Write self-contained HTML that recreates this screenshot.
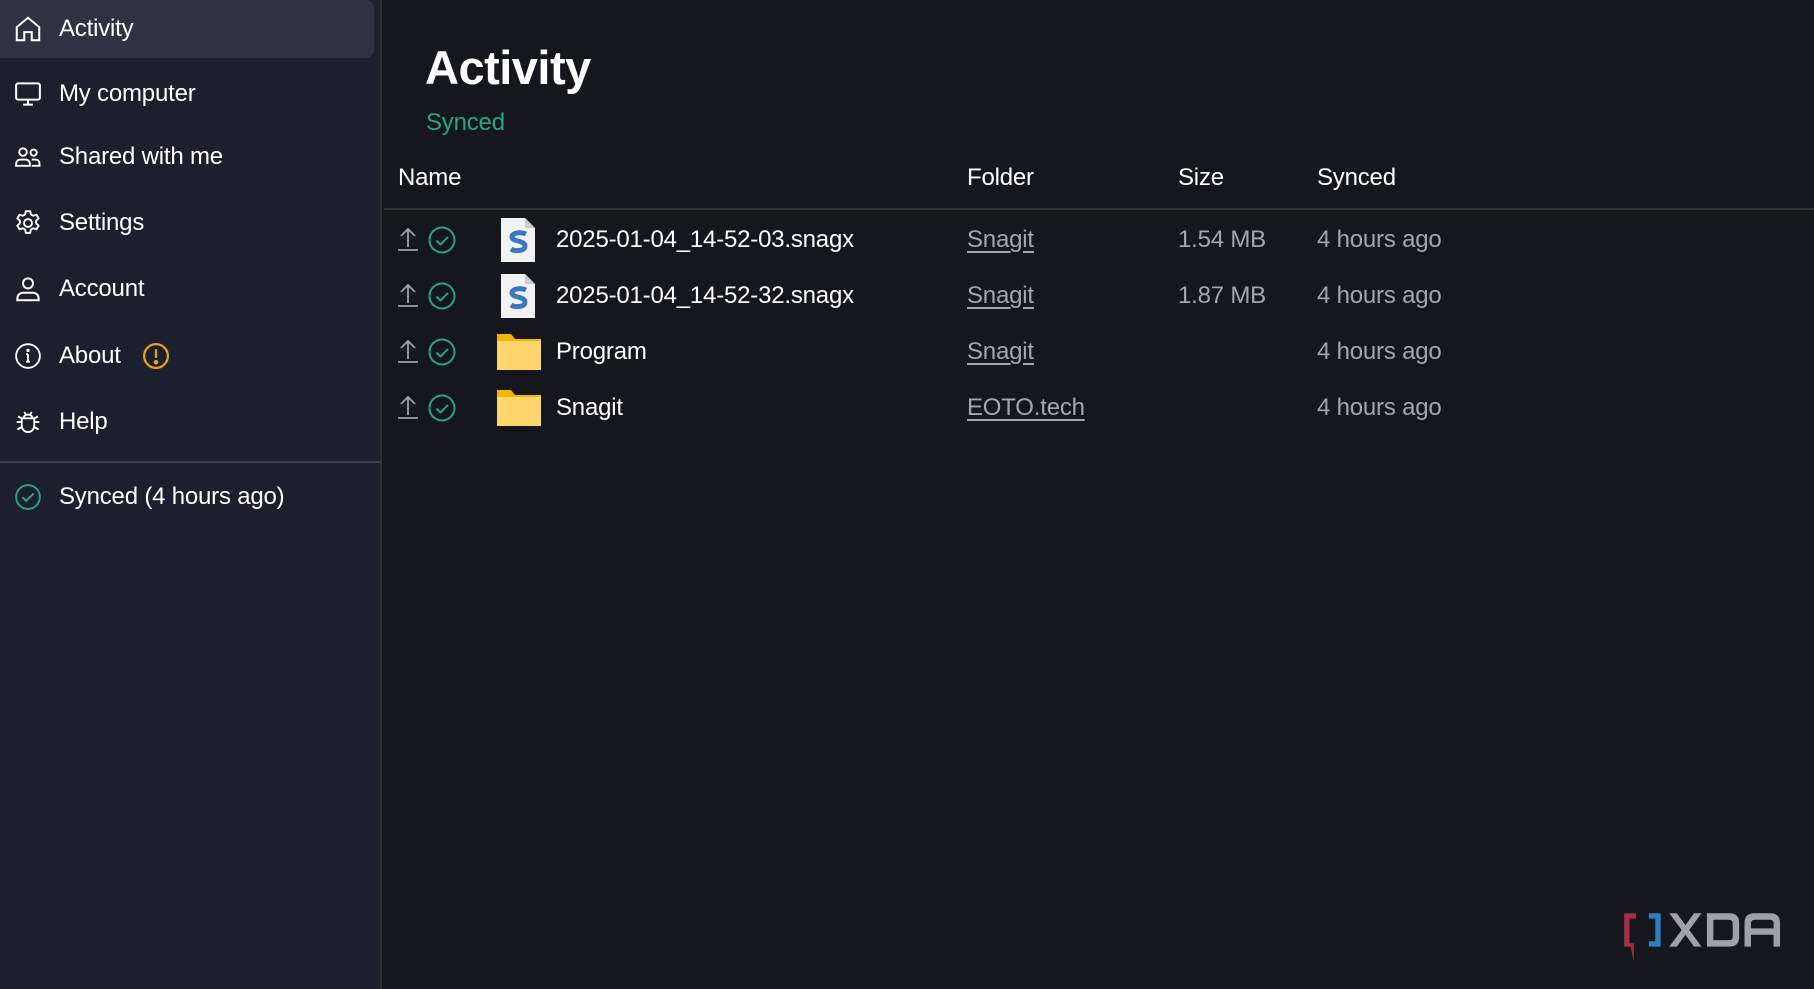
<!DOCTYPE html>
<html><head><meta charset="utf-8"><style>
*{margin:0;padding:0;box-sizing:border-box}
body{width:1814px;height:989px;background:#16171d;font-family:"Liberation Sans",sans-serif;color:#fff;position:relative;overflow:hidden}
.side{position:absolute;left:0;top:0;width:382px;height:989px;background:#1b1f2e;border-right:2px solid #2b2e3b}
.item{position:absolute;left:0;height:58px;width:374px;display:flex;align-items:center;font-size:24px;letter-spacing:-0.2px}
.item svg{position:absolute;left:13px;width:30px;height:30px}
.item span{position:absolute;left:59px}
.active{background:#2e3242;border-radius:0 8px 8px 0}
.sep{position:absolute;left:0;top:461px;width:382px;height:2px;background:#3a3d4a}
.t{position:absolute;white-space:nowrap;letter-spacing:-0.2px}
.h{font-size:24px;top:164px}
.row{font-size:24px}
.g{color:#a3a6b0}
.u{text-decoration:underline;text-underline-offset:4px}
</style></head><body>
<div class="side">
 <div class="item active" style="top:0"><svg viewBox="0 0 24 24" fill="none" stroke="#fff" stroke-width="1.6"><path d="M3 10.5L12 3l9 7.5V21h-6v-6.5h-6V21H3z"/></svg><span>Activity</span></div>
 <div class="item" style="top:65px"><svg viewBox="0 0 24 24" fill="none" stroke="#fff" stroke-width="1.6"><rect x="2.5" y="3.5" width="19" height="13" rx="1.5"/><path d="M12 16.5v4M8 20.5h8"/></svg><span>My computer</span></div>
 <div class="item" style="top:128px"><svg viewBox="0 0 24 24" fill="none" stroke="#fff" stroke-width="1.5"><circle cx="8" cy="8" r="3"/><circle cx="16.5" cy="8.5" r="2.5"/><path d="M2.5 19v-1.5c0-2 1.5-3.5 3.5-3.5h4c2 0 3.5 1.5 3.5 3.5V19zM15 14h3c1.8 0 3.2 1.3 3.2 3v2H15"/></svg><span>Shared with me</span></div>
 <div class="item" style="top:194px"><svg viewBox="0 0 24 24" fill="none" stroke="#fff" stroke-width="1.5"><circle cx="12" cy="12" r="3.2"/><path d="M10.3 2.5h3.4l.6 2.6 1.9 1.1 2.6-.8 1.7 2.9-2 1.8v2.2l2 1.8-1.7 2.9-2.6-.8-1.9 1.1-.6 2.6h-3.4l-.6-2.6-1.9-1.1-2.6.8-1.7-2.9 2-1.8v-2.2l-2-1.8 1.7-2.9 2.6.8 1.9-1.1z"/></svg><span>Settings</span></div>
 <div class="item" style="top:260px"><svg viewBox="0 0 24 24" fill="none" stroke="#fff" stroke-width="1.6"><circle cx="12" cy="7.5" r="4"/><path d="M3.5 21v-1.5c0-2.5 2-4.5 4.5-4.5h8c2.5 0 4.5 2 4.5 4.5V21z"/></svg><span>Account</span></div>
 <div class="item" style="top:327px"><svg viewBox="0 0 24 24" fill="none" stroke="#fff" stroke-width="1.5"><circle cx="12" cy="12" r="9.5"/><path d="M12 10.5v6M10.5 16.5h3M10.5 10.5H12"/><circle cx="12" cy="7.5" r=".6" fill="#fff"/></svg><span>About</span>
  <svg viewBox="0 0 24 24" style="left:141px" fill="none" stroke="#e8a21c" stroke-width="1.8"><circle cx="12" cy="12" r="9.5"/><path d="M12 6.5v7"/><circle cx="12" cy="17" r="1" fill="#e8a21c"/></svg></div>
 <div class="item" style="top:393px"><svg viewBox="0 0 24 24" fill="none" stroke="#fff" stroke-width="1.5"><path d="M7 9h10v6a5 5 0 01-10 0zM8.5 9a3.5 3 0 017 0M9 4l1.5 2M15 4l-1.5 2M7 12H3M17 12h4M7 16l-3.5 2M17 16l3.5 2M7.5 9.5L4 7.5M16.5 9.5L20 7.5"/></svg><span>Help</span></div>
 <div class="sep"></div>
 <div class="item" style="top:468px"><svg viewBox="0 0 24 24" fill="none" stroke="#2aa37a" stroke-width="1.6"><circle cx="12" cy="12" r="9.5"/><path d="M7.5 12.2l3 3 6-6"/></svg><span>Synced (4 hours ago)</span></div>
</div>

<div class="t" style="left:425px;top:40px;font-size:47px;font-weight:bold;letter-spacing:-0.5px">Activity</div>
<div class="t" style="left:426px;top:109px;font-size:24px;color:#2aa37a">Synced</div>
<div class="t h" style="left:398px">Name</div>
<div class="t h" style="left:967px">Folder</div>
<div class="t h" style="left:1178px">Size</div>
<div class="t h" style="left:1317px">Synced</div>
<div style="position:absolute;left:384px;top:208px;width:1430px;height:2px;background:#2f3140"></div>

<svg width="0" height="0" style="position:absolute"><defs>
<g id="up"><path d="M11 3v18M4 10l7-7 7 7" fill="none" stroke="#9ea1aa" stroke-width="1.8"/><path d="M1 24h20" stroke="#9ea1aa" stroke-width="1.8"/></g>
<g id="ck"><circle cx="14" cy="14" r="12.5" fill="none" stroke="#2aa37a" stroke-width="2"/><path d="M8.5 14.5l4 4 7.5-7.5" fill="none" stroke="#2aa37a" stroke-width="2"/></g>
<g id="file"><path d="M0 0h24l10 10v34H0z" fill="#f3f3f3"/><path d="M24 0v10h10" fill="#ccc"/><path d="M25 16c-4-2-14-2-14 3s13 3 13 9-11 5-14 3" fill="none" stroke="#3a78c6" stroke-width="5"/></g>
<g id="fold"><path d="M0 2h14l4 5h26v31H0z" fill="#f4b400"/><path d="M0 9h44v29H0z" fill="#ffd66b"/></g>
</defs></svg>

<svg style="position:absolute;left:397px;top:226px" width="24" height="28"><use href="#up"/></svg>
<svg style="position:absolute;left:428px;top:226px" width="28" height="28"><use href="#ck"/></svg>
<svg style="position:absolute;left:501px;top:218px" width="36" height="44"><use href="#file"/></svg>
<div class="t row" style="left:556px;top:226px">2025-01-04_14-52-03.snagx</div>
<div class="t row g u" style="left:967px;top:226px">Snagit</div>
<div class="t row g" style="left:1178px;top:226px">1.54 MB</div>
<div class="t row g" style="left:1317px;top:226px">4 hours ago</div>

<svg style="position:absolute;left:397px;top:282px" width="24" height="28"><use href="#up"/></svg>
<svg style="position:absolute;left:428px;top:282px" width="28" height="28"><use href="#ck"/></svg>
<svg style="position:absolute;left:501px;top:274px" width="36" height="44"><use href="#file"/></svg>
<div class="t row" style="left:556px;top:282px">2025-01-04_14-52-32.snagx</div>
<div class="t row g u" style="left:967px;top:282px">Snagit</div>
<div class="t row g" style="left:1178px;top:282px">1.87 MB</div>
<div class="t row g" style="left:1317px;top:282px">4 hours ago</div>

<svg style="position:absolute;left:397px;top:338px" width="24" height="28"><use href="#up"/></svg>
<svg style="position:absolute;left:428px;top:338px" width="28" height="28"><use href="#ck"/></svg>
<svg style="position:absolute;left:497px;top:332px" width="44" height="38"><use href="#fold"/></svg>
<div class="t row" style="left:556px;top:338px">Program</div>
<div class="t row g u" style="left:967px;top:338px">Snagit</div>
<div class="t row g" style="left:1317px;top:338px">4 hours ago</div>

<svg style="position:absolute;left:397px;top:394px" width="24" height="28"><use href="#up"/></svg>
<svg style="position:absolute;left:428px;top:394px" width="28" height="28"><use href="#ck"/></svg>
<svg style="position:absolute;left:497px;top:388px" width="44" height="38"><use href="#fold"/></svg>
<div class="t row" style="left:556px;top:394px">Snagit</div>
<div class="t row g u" style="left:967px;top:394px">EOTO.tech</div>
<div class="t row g" style="left:1317px;top:394px">4 hours ago</div>

<svg style="position:absolute;left:1622px;top:910px" width="172" height="56" viewBox="0 0 160 52">
<path d="M13 3H2v31h6l3 14V31H7V8h6z" fill="#a32f4a"/>
<path d="M25 3h11v31H25v-5h6V8h-6z" fill="#2b7fbf"/>
<path d="M44 3h7l8 11 8-11h7L62.5 18.5 74 34h-7l-8-11-8 11h-7l11.5-15.5z" fill="#a0a1a6"/>
<path d="M79 3h21c6 0 9 3 9 9v13c0 6-3 9-9 9H79zM85 9v19h14c3 0 4-1 4-4V13c0-3-1-4-4-4z" fill="#a0a1a6"/>
<path d="M114 34V12c0-6 3-9 9-9h15c6 0 9 3 9 9v22h-6V23h-21v11zM120 17h21v-4c0-3-1-4-4-4h-13c-3 0-4 1-4 4z" fill="#a0a1a6"/>
</svg>
</body></html>
